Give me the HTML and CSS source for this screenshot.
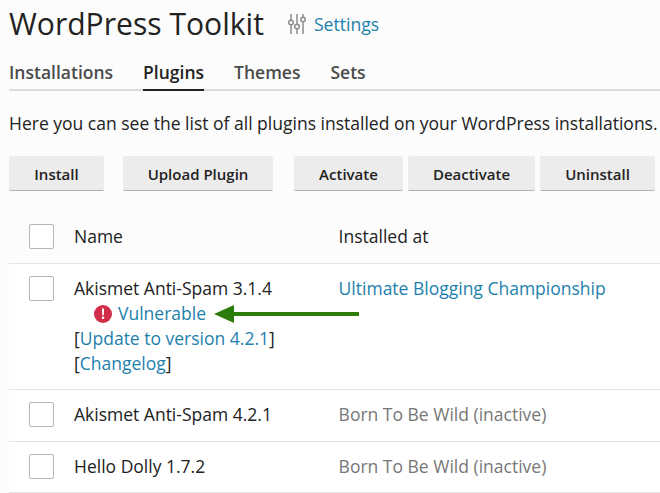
FILE: index.html
```html
<!DOCTYPE html>
<html lang="en">
<head>
<meta charset="utf-8">
<title>WordPress Toolkit</title>
<link rel="stylesheet" href="styles.css">
</head>
<body>
<header class="title-row">
  <h1>WordPress Toolkit</h1>
  <a class="settings" href="#">
    <svg class="sliders" width="18" height="20" viewBox="0 0 18 20" fill="none" stroke="#8c8c8c" stroke-width="1.5">
      <path d="M3 0v6M3 11v9M9 0v10M9 15v5M15 0v3M15 8v12"/>
      <circle cx="3" cy="8.5" r="2.3"/><circle cx="9" cy="12.5" r="2.3"/><circle cx="15" cy="5.5" r="2.3"/>
    </svg>
    <span>Settings</span>
  </a>
</header>
<nav class="tabs">
  <a href="#">Installations</a>
  <a href="#" class="active">Plugins</a>
  <a href="#">Themes</a>
  <a href="#">Sets</a>
</nav>
<p class="intro">Here you can see the list of all plugins installed on your WordPress installations.</p>
<div class="toolbar">
  <div class="group"><button class="install">Install</button></div>
  <div class="group"><button class="upload">Upload Plugin</button></div>
  <div class="group tight">
    <button class="activate">Activate</button>
    <button class="deactivate">Deactivate</button>
    <button class="uninstall">Uninstall</button>
  </div>
</div>
<section class="table">
  <div class="row head">
    <span class="check"></span>
    <span class="name">Name</span>
    <span class="place">Installed at</span>
  </div>
  <div class="row first">
    <span class="check"></span>
    <div class="name">
      <div>Akismet Anti-Spam 3.1.4</div>
      <div class="vuln">
        <svg class="alert" width="18" height="18" viewBox="0 0 18 18"><circle cx="9" cy="9" r="9" fill="#d02d4b"/><path d="M7.9 3.6h2.2l-.3 6.6H8.2z" fill="#fff"/><circle cx="9" cy="12.8" r="1.3" fill="#fff"/></svg>
        <a href="#">Vulnerable</a>
        <svg class="arrow" width="146" height="20" viewBox="0 0 146 20"><path d="M0 10 20 1v7h125v4H20v7z" fill="#2b7c0b"/></svg>
      </div>
      <div>[<a href="#">Update to version 4.2.1</a>]</div>
      <div>[<a href="#">Changelog</a>]</div>
    </div>
    <a class="place" href="#">Ultimate Blogging Championship</a>
  </div>
  <div class="row">
    <span class="check"></span>
    <span class="name">Akismet Anti-Spam 4.2.1</span>
    <span class="place muted">Born To Be Wild (inactive)</span>
  </div>
  <div class="row last">
    <span class="check"></span>
    <span class="name">Hello Dolly 1.7.2</span>
    <span class="place muted">Born To Be Wild (inactive)</span>
  </div>
</section>
</body>
</html>
```
FILE: styles.css
```css
* { box-sizing: border-box; }
html, body { margin: 0; height: 493px; overflow: hidden; }
body {
  width: 660px;
  padding-left: 9px;
  background: #fcfcfc;
  color: #222;
  font: 17.5px/25px "Open Sans", sans-serif;
}
a { color: #1d80ad; text-decoration: none; }
.title-row { display: flex; align-items: center; height: 48px; white-space: nowrap; }
h1 { margin: 0; font-size: 30.1px; font-weight: 400; line-height: 48px; color: #222; }
.settings { display: flex; align-items: center; gap: 8px; margin-left: 24px; font-size: 17.6px; }
.sliders { display: block; }
.tabs {
  display: flex;
  gap: 30px;
  height: 43px;
  border-bottom: 2px solid #dcdcdc;
  font-weight: 600;
  line-height: 25px;
  padding-top: 12px;
  width: 660px;
}
.tabs a { color: #4b4b4b; height: 31px; }
.tabs a.active { color: #222; border-bottom: 2px solid #222; }
.intro { margin: 20px 0 0; line-height: 25px; white-space: nowrap; }
.toolbar { display: flex; margin-top: 20px; white-space: nowrap; }
.group { display: flex; }
.tight { gap: 5px; margin-left: 21px; }
button {
  height: 35px;
  padding: 0;
  border: 0;
  border-bottom: 1px solid #b0b0b0;
  border-radius: 2px;
  background: #ececec;
  color: #222;
  font: 600 15px/36px "Open Sans", sans-serif;
}
.install { width: 95px; margin-right: 19px; }
.upload { width: 150px; }
.activate { width: 109px; }
.deactivate { width: 127px; }
.uninstall { width: 115px; }
.table { margin-top: 10px; }
.row {
  display: flex;
  align-items: flex-start;
  width: 651px;
  height: 52px;
  background: #fff;
  border-top: 1px solid #e4e4e4;
  padding: 12px 0 12px 20px;
}
.row.head { height: 62px; border-top: 0; background: transparent; padding: 23px 0 0 20px; }
.row.first { height: 126px; }
.row.last { border-bottom: 1px solid #e4e4e4; }
.check {
  flex: none;
  width: 25px;
  height: 25px;
  background: #fff;
  border: 1px solid #b5b5b5;
  border-radius: 2px;
}
.name { width: 264.6px; margin-left: 20px; flex: none; }
.place { white-space: nowrap; }
.muted { color: #777; }
.vuln { display: flex; align-items: center; height: 25px; margin-left: 20px; gap: 6px; }
.vuln svg { flex: none; }
.arrow { margin-left: 2px; }
```
